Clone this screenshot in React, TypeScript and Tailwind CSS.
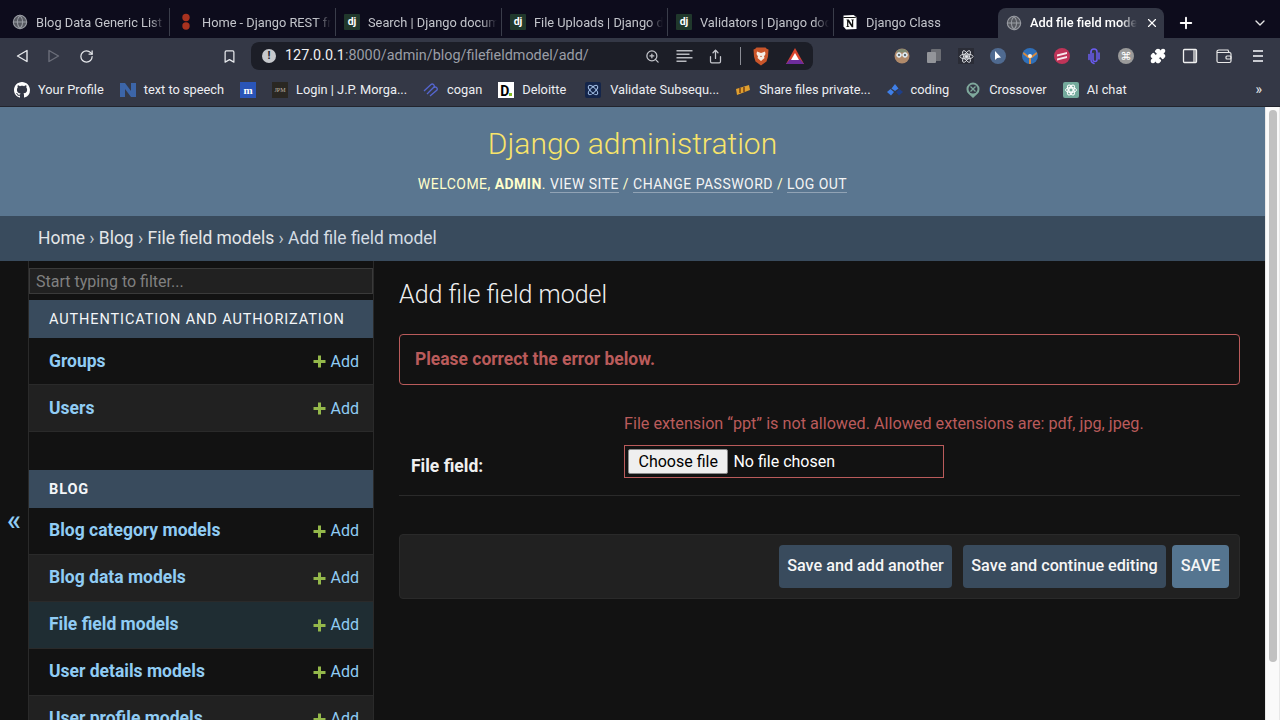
import React from "react";
import { Globe, X, Plus, ChevronDown, RotateCw, Bookmark, ZoomIn, Share, Puzzle } from "lucide-react";

const Dj = () => (
  <span className="w-4 h-4 rounded-[1px] flex items-center justify-center text-[10.5px] font-bold text-white leading-none shrink-0 bg-[#20382c]">dj</span>
);
const Dots = () => (
  <svg width="16" height="18" viewBox="0 0 16 18" className="shrink-0"><circle cx="8" cy="4.500" r="3.700" fill="#a8321f" /><circle cx="8" cy="13" r="3.700" fill="#a8321f" /></svg>
);
const Notion = () => (
  <svg width="16" height="16" viewBox="0 0 16 16" className="shrink-0"><path d="M1.500 1.500 11.500 1 14.500 3v12L4 15.500 1.500 12.500Z" fill="#fff" /><path d="M1.500 3.500h10.500l2.500-.5" stroke="#111" fill="none" strokeWidth="1" /><path d="M4.500 5.500h2.300l3.200 5V6.200h-.8v-.7h2.600v.7h-.6v7H9.800L6.300 8v4.300h.9v.7H4.400v-.7h.7V6.200h-.6Z" fill="#111" /></svg>
);
const G = () => <Globe size={16} strokeWidth={1.600} className="shrink-0 text-[#9a9da4] fill-[#55585f]" />;

const tabs: { t: string; i: React.ReactNode; w: string }[] = [
  { t: "Blog Data Generic List", i: <G />, w: "w-[166px]" },
  { t: "Home - Django REST fr", i: <Dots />, w: "w-[166px]" },
  { t: "Search | Django docum", i: <Dj />, w: "w-[166px]" },
  { t: "File Uploads | Django d", i: <Dj />, w: "w-[166px]" },
  { t: "Validators | Django doc", i: <Dj />, w: "w-[166px]" },
  { t: "Django Class", i: <Notion />, w: "w-[164px]" },
];

const Tab = ({ t, i, w, last }: { t: string; i: React.ReactNode; w: string; last: boolean }) => (
  <div className={`${w} h-[28px] flex items-center pl-2 pr-1 gap-2 ${last ? "" : "border-r border-[#3a3d4a]"}`}>
    {i}
    <span className="flex-1 min-w-0 pt-[2px] whitespace-nowrap text-[12.8px] text-[#c3c5cb] [mask-image:linear-gradient(to_right,black_88%,transparent)]">{t}</span>
  </div>
);

const Fav = ({ c }: { c: React.ReactNode }) => <span className="w-4 h-4 shrink-0 flex items-center justify-center">{c}</span>;

const Mark = ({ icon, text, cls }: { icon: React.ReactNode; text?: string; cls?: string }) => (
  <div className={`flex items-center gap-2 ${cls ?? ""}`}>
    <Fav c={icon} />
    {text && <span className="text-[12.8px] text-[#eceef2] whitespace-nowrap">{text}</span>}
  </div>
);

const GitHub = () => (
  <svg viewBox="0 0 16 16" width="16" height="16" fill="#fff"><path d="M8 0C3.58 0 0 3.58 0 8c0 3.54 2.29 6.53 5.47 7.59.4.07.55-.17.55-.38 0-.19-.01-.82-.01-1.49-2.01.37-2.53-.49-2.69-.94-.09-.23-.48-.94-.82-1.13-.28-.15-.68-.52-.01-.53.63-.01 1.08.58 1.23.82.72 1.21 1.87.87 2.33.66.07-.52.28-.87.51-1.07-1.78-.2-3.64-.89-3.64-3.95 0-.87.31-1.59.82-2.15-.08-.2-.36-1.02.08-2.12 0 0 .67-.21 2.2.82.64-.18 1.32-.27 2-.27s1.36.09 2 .27c1.53-1.04 2.2-.82 2.2-.82.44 1.1.16 1.92.08 2.12.51.56.82 1.27.82 2.15 0 3.07-1.87 3.75-3.65 3.95.29.25.54.73.54 1.48 0 1.07-.01 1.93-.01 2.2 0 .21.15.46.55.38A8.01 8.01 0 0 0 16 8c0-4.42-3.58-8-8-8Z" /></svg>
);

const AddLink = ({ up }: { up?: boolean }) => (
  <span className={`flex items-center gap-[5px] text-[16px] text-[#90ccf4] ${up ? "" : "pt-[1px]"}`}>
    <svg width="13" height="13" viewBox="0 0 13 13"><path d="M5 0.500h3V5h4.500v3H8v4.500H5V8H0.500V5H5Z" fill="#94b84a" /></svg>
    Add
  </span>
);

const Row = ({ name, alt, sel, blog }: { name: string; alt?: boolean; sel?: boolean; blog?: boolean }) => (
  <div className={`h-[47px] flex items-center justify-between pl-5 pr-[14px] border-b border-[#2a2a2a] ${sel ? "bg-[#1f2d33]" : alt ? "bg-[#212121]" : ""}`}>
    <span className={`text-[17.5px] font-bold text-[#90ccf4] ${blog ? "pb-[2px]" : ""}`}>{name}</span>
    <AddLink up={blog} />
  </div>
);

const Caption = ({ t, bold }: { t: string; bold?: boolean }) => (
  <div className={`h-[38px] bg-[#394b5d] flex items-center pl-5 pt-[1px] text-[14.5px] tracking-[0.9px] text-[#f4f6f8] ${bold ? "font-bold" : "font-normal"}`}>{t}</div>
);

const Btn = ({ t, cls }: { t: string; cls: string }) => (
  <span className={`h-[43px] flex items-center justify-center rounded-[4px] pb-[2px] text-[16.2px] font-medium text-[#f6f6f6] ${cls}`}>{t}</span>
);

export default function App() {
  return (
    <div className="w-[1280px] h-[720px] overflow-hidden flex flex-col bg-[#121212] font-['Roboto',sans-serif]">
      {/* tab strip */}
      <div className="h-[38px] bg-[#0d0c1c] flex items-end pl-1 shrink-0">
        <div className="flex items-center h-[28px] mb-[2px]">
          {tabs.map((t, i) => <Tab key={t.t} {...t} last={i === tabs.length - 1} />)}
        </div>
        <div className="w-[166px] h-[30px] bg-[#343846] rounded-t-[8px] flex items-center pl-2 pr-[5px] gap-2">
          <G />
          <span className="flex-1 min-w-0 overflow-hidden whitespace-nowrap text-[12.8px] font-medium text-white [mask-image:linear-gradient(to_right,black_85%,transparent)]">Add file field mode</span>
          <X size={14} className="text-white shrink-0" />
        </div>
        <Plus size={18} strokeWidth={2.500} className="text-white ml-[13px] mb-[6px]" />
        <ChevronDown size={16} className="text-[#e5e5e5] ml-auto mr-3 mb-[7px]" />
      </div>
      {/* toolbar */}
      <div className="h-[36px] bg-[#343846] flex items-center shrink-0 pl-[14px]">
        <svg width="16" height="16" viewBox="0 0 16 16" fill="none" stroke="#e6e8ec" strokeWidth="1.400" strokeLinejoin="round"><path d="M13 2.500v11L3.500 8Z" /></svg>
        <svg width="16" height="16" viewBox="0 0 16 16" fill="none" stroke="#6b6e7a" strokeWidth="1.400" strokeLinejoin="round" className="ml-4"><path d="M3 2.500v11L12.500 8Z" /></svg>
        <RotateCw size={15} className="text-[#e6e8ec] ml-[17px]" />
        <Bookmark size={15} className="text-[#e6e8ec] ml-[128px]" />
        <div className="ml-[14px] w-[562px] h-[28px] bg-[#1c1e27] rounded-[8px] flex items-center pl-[11px] pr-[9px]">
          <span className="w-[14px] h-[14px] rounded-full bg-[#c6c8cc] text-[#1c1e27] text-[11px] font-bold flex items-center justify-center">!</span>
          <span className="ml-[9px] text-[14.4px] text-[#f0f0f2] whitespace-nowrap">127.0.0.1<span className="text-[#9a9da6]">:8000/admin/blog/filefieldmodel/add/</span></span>
          <ZoomIn size={15} className="text-[#c4c6cc] ml-auto" />
          <svg width="17" height="14" viewBox="0 0 17 14" className="ml-[16px]" fill="#b8bac0"><rect x="0.500" y="1" width="16" height="1.500" /><rect x="0.500" y="4.500" width="13" height="1.500" /><rect x="0.500" y="8" width="16" height="1.500" /><rect x="0.500" y="11.500" width="10" height="1.500" /></svg>
          <Share size={15} className="text-[#c4c6cc] ml-[15px]" />
          <span className="w-px h-[18px] bg-[#8b8d95] ml-[17px]" />
          <svg width="16" height="19" viewBox="0 0 16 19" className="ml-[12px]"><path d="M3.500 .5h9l1.500 1.500 1.500.500-.5 7-1.500 5L8 18.500 2.500 14.500 1 9.500l-.5-7L2 2Z" fill="#c9552a" /><path d="M4 4.500 8 6l4-1.500L12.500 7l-1.500 2.500.5 1.500-3.500 3-3.500-3 .5-1.500L3.500 7Z" fill="#f5ece4" /><path d="M8 8.500l-1 1.500h2Z" fill="#c9552a" /></svg>
          <svg width="18" height="16" viewBox="0 0 18 16" className="ml-[17px]"><path d="M9 0 18 16H0Z" fill="#d8452e" /><path d="M3.500 11.500h11L18 16H0Z" fill="#6d2c9c" /><path d="M9 5 13 12H5Z" fill="#fff" /></svg>
        </div>
        <div className="flex items-center gap-4 ml-[81px]">
          <svg width="16" height="16" viewBox="0 0 16 16"><circle cx="8" cy="8" r="7.500" fill="#b08a6a" /><path d="M3 2.500a7 5 0 0 1 10 0v2H3Z" fill="#7f8a72" /><circle cx="5" cy="7" r="2.300" fill="#cfe6f0" stroke="#e8eef2" /><circle cx="11" cy="7" r="2.300" fill="#cfe6f0" stroke="#e8eef2" /><circle cx="5" cy="7" r="0.900" fill="#333" /><circle cx="11" cy="7" r="0.900" fill="#333" /></svg>
          <Fav c={<svg width="16" height="16" viewBox="0 0 16 16"><rect x="5" y="1" width="10" height="12" rx="1" fill="#6c6e74" /><rect x="1" y="4" width="9" height="11" rx="1" fill="#93959a" /></svg>} />
          <span className="w-4 h-4 bg-[#2a2c36] flex items-center justify-center"><svg width="15" height="15" viewBox="-12 -12 24 24" fill="none" stroke="#e6e8ec" strokeWidth="1.400"><circle r="2.200" fill="#e6e8ec" /><ellipse rx="10.500" ry="4" /><ellipse rx="10.500" ry="4" transform="rotate(60)" /><ellipse rx="10.500" ry="4" transform="rotate(120)" /></svg></span>
          <span className="w-4 h-4 rounded-full bg-[#4f6a90] flex items-center justify-center"><svg width="8" height="10" viewBox="0 0 8 10"><path d="M1 0v9l2.200-2 3.800-.5Z" fill="#fff" /></svg></span>
          <svg width="16" height="16" viewBox="0 0 16 16"><circle cx="8" cy="8" r="8" fill="#2f6fb8" /><path d="M1.500 4 6 7.500h4L14.500 4 15 6 10 10H9v6H7v-6H6L1 6Z" fill="#d98a3c" /><circle cx="8" cy="8" r="2" fill="#f4f0e8" /></svg>
          <svg width="16" height="16" viewBox="0 0 16 16"><circle cx="8" cy="8" r="8" fill="#bf3458" /><path d="M3 6.500 13 4v2L3 8.500ZM3 10.500 13 8v2L3 12.500Z" fill="#f8e8ec" /></svg>
          <svg width="16" height="17" viewBox="0 0 16 17" fill="none" stroke="#6a5cf0" strokeWidth="1.500" strokeLinecap="round"><path d="M7 5.500v6a2 2 0 0 0 4 0V4a3 3 0 0 0-6 0" /><path d="M5 4v8a4 4 0 0 0 3 3.500M13 5v6" /><path d="M3 6.500v5" /></svg>
          <span className="w-4 h-4 rounded-full bg-[#9a9a9a] text-white text-[11px] leading-none flex items-center justify-center font-['DejaVu_Sans',sans-serif]">⌘</span>
          <Puzzle size={16} className="text-white fill-white" />
          <svg width="16" height="16" viewBox="0 0 16 16" fill="none"><rect x="1.500" y="1.500" width="13" height="13" rx="1" fill="#3a3d4c" stroke="#f0f0f0" strokeWidth="1.300" /><rect x="11" y="2" width="3" height="12" fill="#d8d8d8" opacity="0.700" /></svg>
          <svg width="16" height="16" viewBox="0 0 16 16" fill="none" stroke="#e8e8e8" strokeWidth="1.200" className="ml-[2px]"><path d="M1 4.500V13a1.500 1.500 0 0 0 1.500 1.500h11A1.500 1.500 0 0 0 15 13V6a1.500 1.500 0 0 0-1.500-1.500H1Zm0 0A2 2 0 0 1 3 2h9l1 2.500" /><rect x="10" y="8" width="5" height="3" rx="1" /></svg>
          <svg width="12" height="14" viewBox="0 0 12 14" fill="#c8cad0" className="ml-[4px]"><rect x="1" y="1" width="10" height="2" /><rect x="1" y="6" width="10" height="2" /><rect x="1" y="11" width="10" height="2" /></svg>
        </div>
      </div>
      {/* bookmarks */}
      <div className="h-[33px] bg-[#343846] flex items-center gap-4 pl-[14px] pr-[14px] shrink-0 border-b border-[#22242d]">
        <Mark icon={<GitHub />} text="Your Profile" />
        <Mark icon={<svg width="16" height="14" viewBox="0 0 16 14" fill="#3c65a8"><path d="M0 0h5l6 8V0h5v14h-5L5 6v8H0Z" /></svg>} text="text to speech" />
        <Mark icon={<span className="w-4 h-4 bg-[#2a55b8] text-white text-[11px] font-bold flex items-center justify-center font-['Liberation_Serif',serif]">m</span>} />
        <Mark icon={<span className="w-4 h-4 bg-[#2a2722] text-[#c0b8a8] text-[6px] flex items-center justify-center font-['Liberation_Serif',serif]">JPM</span>} text="Login | J.P. Morga..." />
        <Mark icon={<svg width="16" height="14" viewBox="0 0 16 14" fill="none" stroke="#5566d0" strokeWidth="1.300"><path d="M1 8 8 1.500a2 2 0 0 1 3 2.500L5 10M4 11l7-7M7 13l7-6a2 2 0 0 0-3-2.500" /></svg>} text="cogan" />
        <Mark icon={<span className="w-4 h-4 bg-white text-black text-[14px] font-bold flex items-end pl-[2px] leading-none relative">D<span className="absolute right-[2px] bottom-[2px] w-[3px] h-[3px] bg-[#86bc25]" /></span>} text="Deloitte" />
        <Mark cls="ml-[3px] gap-[9px]" icon={<span className="w-4 h-4 bg-[#14254a] rounded-[2px] flex items-center justify-center"><svg width="14" height="14" viewBox="0 0 14 14" fill="none" stroke="#a8c4ea" strokeWidth="1"><ellipse cx="7" cy="7" rx="6" ry="2.500" transform="rotate(45 7 7)" /><ellipse cx="7" cy="7" rx="6" ry="2.500" transform="rotate(-45 7 7)" /></svg></span>} text="Validate Subsequ..." />
        <Mark icon={<svg width="16" height="12" viewBox="0 0 16 12"><path d="M1 5l13-4 1 5-13 5Z" fill="#e0a030" /><path d="M5 4v5M9 3v5" stroke="#7a4010" strokeWidth="1.500" /></svg>} text="Share files private..." />
        <Mark icon={<svg width="16" height="12" viewBox="0 0 16 12"><path d="M8 0l3.500 4.500L8 7 4.500 4.500Z" fill="#3f7fe8" /><path d="M3.500 5 7 8l-3 3.500L0 8Z" fill="#3f7fe8" /><path d="M12.500 5 16 8l-4 3.500L9 8Z" fill="#1f3f88" /></svg>} text="coding" />
        <Mark icon={<svg width="14" height="16" viewBox="0 0 14 16"><path d="M7 16 2.200 11.500A6.500 6.500 0 1 1 11.800 11.500Z" fill="#7fa89c" /><circle cx="7" cy="7" r="4.500" fill="#343846" /><path d="M4.500 4.500l5 5M9.500 4.500l-5 5" stroke="#7fa89c" strokeWidth="1.300" /></svg>} text="Crossover" />
        <Mark icon={<span className="w-4 h-4 bg-[#74aa9c] rounded-[2px] flex items-center justify-center"><svg width="12" height="12" viewBox="0 0 12 12" fill="none" stroke="#fff" strokeWidth="0.900"><circle cx="6" cy="6" r="2" /><ellipse cx="6" cy="6" rx="5.500" ry="2.500" /><ellipse cx="6" cy="6" rx="5.500" ry="2.500" transform="rotate(60 6 6)" /><ellipse cx="6" cy="6" rx="5.500" ry="2.500" transform="rotate(120 6 6)" /></svg></span>} text="AI chat" />
        <span className="ml-auto mr-[4px] text-[14px] leading-none text-[#e6e8ec] pb-[2px]">»</span>
      </div>
      {/* page */}
      <div className="flex-1 min-h-0 flex">
        <div className="flex-1 min-w-0 flex flex-col">
          <div className="h-[109px] bg-[#5a7690] flex flex-col items-center shrink-0 pt-[18px]">
            <div className="text-[30px] font-light text-[#f8e46a] leading-[38px]">Django administration</div>
            <div className="mt-[11px] text-[14px] font-normal tracking-[0.47px] text-[#ffffcc]">
              WELCOME, <b>ADMIN</b>. <span className="border-b border-[#ffffff55] text-[#f4f4f4]">VIEW SITE</span> / <span className="border-b border-[#ffffff55] text-[#f4f4f4]">CHANGE PASSWORD</span> / <span className="border-b border-[#ffffff55] text-[#f4f4f4]">LOG OUT</span>
            </div>
          </div>
          <div className="h-[45px] bg-[#394b5d] flex items-center pl-[38px] text-[17.45px] text-[#e4e6e8] shrink-0">
            <span>Home <span className="text-[#c0c8d0]">›</span> Blog <span className="text-[#c0c8d0]">›</span> File field models <span className="text-[#c0c8d0]">›</span> <span className="text-[#d4dce4]">Add file field model</span></span>
          </div>
          <div className="flex-1 min-h-0 flex overflow-hidden">
            <div className="w-[29px] shrink-0 border-r border-[#2a2a2a] flex justify-center pt-[245px]">
              <span className="text-[#90ccf4] text-[29px] leading-none font-medium">«</span>
            </div>
            <div className="w-[345px] shrink-0 border-r border-[#2a2a2a] pt-[7px]">
              <div className="h-[26px] bg-[#212121] border border-[#3a3a3a] flex items-center pl-[6px] pt-[1px] text-[16px] text-[#808080]">Start typing to filter...</div>
              <div className="mt-[6px]"><Caption t="AUTHENTICATION AND AUTHORIZATION" /></div>
              <Row name="Groups" />
              <Row name="Users" alt />
              <div className="mt-[38px]"><Caption t="BLOG" bold /></div>
              <Row name="Blog category models" blog />
              <Row name="Blog data models" alt blog />
              <Row name="File field models" sel blog />
              <Row name="User details models" blog />
              <Row name="User profile models" alt blog />
            </div>
            <div className="flex-1 min-w-0 pl-[25px] pr-[25px] pt-[17px]">
              <h1 className="text-[25px] font-light text-[#f0f0f0] leading-[34px]">Add file field model</h1>
              <div className="mt-[22px] h-[51px] border border-[#ba5b5b] rounded-[4px] flex items-center pl-[15px] text-[17.45px] font-bold text-[#ba5b5b]">Please correct the error below.</div>
              <div className="pb-[16px] border-b border-[#2a2a2a]">
                <div className="mt-[29px] ml-[225px] text-[16.2px] text-[#ba5b5b] leading-[20px]">File extension “ppt” is not allowed. Allowed extensions are: pdf, jpg, jpeg.</div>
                <div className="mt-[11px] flex items-start">
                  <span className="w-[225px] pl-3 pt-[8px] text-[17.5px] font-bold text-[#f0f0f0]">File field:</span>
                  <div className="w-[320px] h-[33px] border border-[#ba5b5b] flex items-center pl-[3px] text-[16px] text-white">
                    <span className="h-[25px] px-[9.5px] bg-[#efefef] text-black rounded-[2px] border border-[#8a8a8a] flex items-center">Choose file</span>
                    <span className="ml-[5px]">No file chosen</span>
                  </div>
                </div>
              </div>
              <div className="mt-[38px] h-[65px] bg-[#212121] rounded-[4px] border border-[#2a2a2a] flex items-center justify-end pr-[10px]">
                <Btn t="Save and add another" cls="bg-[#394b5d] w-[173px]" />
                <Btn t="Save and continue editing" cls="bg-[#394b5d] w-[203px] ml-[11px]" />
                <Btn t="SAVE" cls="bg-[#557590] w-[57px] ml-[6px]" />
              </div>
            </div>
          </div>
        </div>
        <div className="w-[15px] shrink-0 bg-[#fafafa] border-l border-[#e8e8e8] border-r flex justify-center pt-[3px]">
          <div className="w-2 h-[552px] bg-[#c1c1c1] rounded-full" />
        </div>
      </div>
    </div>
  );
}
